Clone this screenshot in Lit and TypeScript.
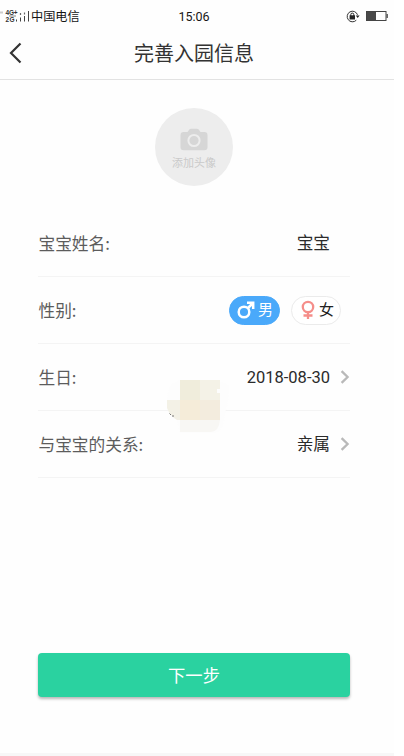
import { LitElement, html, css } from "lit";
import { customElement } from "lit/decorators.js";

const chevron = html`<svg class="chevron" width="10" height="14" viewBox="0 0 10 14">
  <path d="M1.6 1.2 L7.6 7 L1.6 12.8" fill="none" stroke="#b9b9b9" stroke-width="2.3" />
</svg>`;

@customElement("status-bar")
class StatusBar extends LitElement {
  static styles = css`
    :host {
      display: grid;
      grid-template-columns: 1fr auto 1fr;
      align-items: center;
      height: 32px;
      padding: 0 6px 0 0;
      font: 12px/16px Roboto, "Noto Sans CJK SC", sans-serif;
      color: #151515;
    }
    .carrier { display: flex; align-items: center; }
    .carrier span { font-size: 12.2px; padding-top: 2px; }
    .time { font-size: 12.5px; padding-top: 1px; }
    .right { display: flex; align-items: center; justify-content: flex-end; gap: 6px; }
    .net { font: 700 6.5px "Liberation Sans", sans-serif; fill: #333; }
    svg { display: block; flex: none; }
  `;
  render() {
    return html`
      <div class="carrier">
        <svg width="31" height="16" viewBox="0 0 31 16">
          <path d="M0 4.5h3" stroke="#ccc" stroke-width="2" />
          <text class="net" x="5.5" y="7.3" textLength="12">4G+</text>
          <text class="net" x="5.5" y="13.6" textLength="9">2G</text>
          <path d="M9 8h7" stroke="#666" stroke-width="0.8" fill="none" />
          <path d="M16.5 11.5v2M20.5 9.5v4M24.5 8v5.5M28.5 3v10.5" stroke="#444" stroke-width="1" />
          <path d="M20.5 5v2M24.5 4.5v2" stroke="#666" stroke-width="1.2" />
        </svg>
        <span>中国电信</span>
      </div>
      <div class="time">15:06</div>
      <div class="right">
        <svg width="14" height="13" viewBox="0 0 14 13">
          <path d="M10.3 10.2A5.3 5.3 0 1 1 11.5 4.8" fill="none" stroke="#333" stroke-width="1" />
          <path d="M9.8 5.5h3.8l-1.9 2.5z" fill="#222" />
          <rect x="3.6" y="5.3" width="5.4" height="4.2" fill="#222" />
          <path d="M4.8 6V4.6a1.5 1.5 0 0 1 3 0V6" fill="none" stroke="#222" />
        </svg>
        <svg width="22" height="10" viewBox="0 0 22 10">
          <rect x="0.5" y="0.5" width="19.5" height="9" fill="#fff" stroke="#444" />
          <rect x="1" y="1" width="9" height="8" fill="#494949" />
          <rect x="20.5" y="3" width="1.3" height="4" fill="#444" />
        </svg>
      </div>
    `;
  }
}

@customElement("app-root")
class AppRoot extends LitElement {
  static styles = css`
    :host {
      display: block;
      width: 404px;
      height: 756px;
      overflow: hidden;
      background: #fff;
      font-family: Roboto, "Noto Sans CJK SC", sans-serif;
    }
    .screen {
      display: flex;
      flex-direction: column;
      width: 394px;
      height: 756px;
      box-sizing: border-box;
      background: #fefefe;
      border-bottom: 3px solid #f7f7f7;
    }
    .header {
      display: grid;
      grid-template-columns: 40px 1fr 46px;
      align-items: center;
      height: 47px;
      border-bottom: 1px solid #e2e2e2;
    }
    .back { display: block; margin: -5px 0 0 9px; }
    .title {
      margin-top: -3px;
      text-align: center;
      font-size: 20px;
      line-height: 28px;
      color: #333;
    }
    .form {
      flex: 1;
      display: flex;
      flex-direction: column;
      padding: 28px 44px 0 38px;
    }
    .avatar {
      align-self: center;
      width: 78px;
      height: 78px;
      border-radius: 50%;
      background: #ededed;
      display: flex;
      flex-direction: column;
      align-items: center;
      color: #cacaca;
      font-size: 11px;
      line-height: 16px;
      box-sizing: border-box;
      padding-top: 20px;
    }
    .avatar svg { display: block; margin-bottom: 5px; }
    .rows { margin-top: 24px; position: relative; }
    .row {
      display: flex;
      align-items: center;
      justify-content: space-between;
      height: 67px;
      box-sizing: border-box;
      border-bottom: 1px solid #f4f4f4;
      font-size: 16.7px;
      line-height: 24px;
      color: #5c5c5c;
    }
    .label { padding-left: 0.5px; font-family: "Noto Sans CJK SC", sans-serif; }
    .value { display: flex; align-items: center; color: #2b2b2b; }
    .value span { padding-top: 2px; }
    .value .date { padding-top: 1px; font-size: 16.5px; }
    .plain { padding-right: 20px; }
    .value .chevron { margin-left: 10px; }
    .genders { display: flex; gap: 11px; padding-right: 9px; }
    .pill {
      display: flex;
      align-items: center;
      gap: 2px;
      box-sizing: border-box;
      width: 50px;
      height: 29px;
      padding-left: 8px;
      border: 1px solid #ebebeb;
      border-radius: 15px;
      background: #fff;
      color: #222;
      font-size: 15px;
    }
    .pill.on { background: #4aa9fa; border-color: #4aa9fa; color: #fff; width: 51px; padding-left: 7px; gap: 3px; }
    .pill svg { display: block; flex: none; }
    .smudge { position: absolute; left: 127px; top: 168px; display: block; }
    .next {
      display: block;
      margin-top: 175px;
      width: 312px;
      height: 44px;
      flex: none;
      padding: 2px 0 0;
      border: 0;
      border-radius: 4px;
      background: #2ad2a0;
      color: #fff;
      font: 17.3px/24px Roboto, "Noto Sans CJK SC", sans-serif;
      box-shadow: 0 2px 3px rgba(0, 0, 0, 0.28);
    }
  `;

  render() {
    return html`
      <div class="screen">
        <status-bar></status-bar>
        <div class="header">
          <svg class="back" width="14" height="22" viewBox="0 0 14 22">
            <path d="M11.5 1.5L2 11l9.5 9.5" fill="none" stroke="#333" stroke-width="2.2" />
          </svg>
          <div class="title">完善入园信息</div>
        </div>
        <div class="form">
          <div class="avatar">
            <svg width="28" height="23" viewBox="0 0 28 23">
              <path d="M3.5 4h4L9.3 1.5Q10 .8 11 .8h6q1 0 1.7.7L20.5 4h4q3 0 3 3v12.2q0 3-3 3h-21q-3 0-3-3V7q0-3 3-3z" fill="#d6d6d6" />
              <circle cx="14" cy="12.5" r="5.6" fill="#d6d6d6" stroke="#ededed" stroke-width="2" />
            </svg>
            <span>添加头像</span>
          </div>
          <div class="rows">
            <div class="row"><span class="label">宝宝姓名:</span><span class="value plain"><span>宝宝</span></span></div>
            <div class="row">
              <span class="label">性别:</span>
              <div class="genders">
                <div class="pill on">
                  <svg width="18" height="18" viewBox="0 0 18 18" fill="none" stroke="#fff" stroke-width="2.5">
                    <circle cx="7" cy="11" r="5.3" />
                    <path d="M11 7l5-5M10 1.8h6.2V8" />
                  </svg>
                  <span>男</span>
                </div>
                <div class="pill">
                  <svg width="17" height="20" viewBox="0 0 17 20" fill="none" stroke="#f58e8a" stroke-width="2.3">
                    <circle cx="8" cy="7" r="5.2" />
                    <path d="M8 12v7M3.5 15.5h9" />
                  </svg>
                  <span>女</span>
                </div>
              </div>
            </div>
            <div class="row"><span class="label">生日:</span><span class="value"><span class="date">2018-08-30</span>${chevron}</span></div>
            <div class="row"><span class="label">与宝宝的关系:</span><span class="value"><span>亲属</span>${chevron}</span></div>
            <svg class="smudge" width="66" height="58" viewBox="0 0 66 58">
              <path d="M8 5Q2 12 2 24l9 14 4 17h36q8-4 9-20 4-12 4-28L52 2H15z" fill="#fdfdfd" />
              <rect x="15" y="2" width="20" height="20" fill="#f0eddc" />
              <path d="M35 2h20v9h-3v4h3v7H35z" fill="#f4f2e7" />
              <path d="M2 22h13v20h-3Q5 38 2 30z" fill="#f3f1e6" />
              <rect x="15" y="22" width="20" height="20" fill="#f5ecd9" />
              <rect x="35" y="22" width="20" height="20" fill="#f3ecde" />
              <path d="M15 42h40q-1 11-9 12H15z" fill="#f8f7f4" />
              <path d="M4.5 35.5l1.5 1.5M7 38h2" stroke="#777" stroke-width="1" />
            </svg>
          </div>
          <button class="next">下一步</button>
        </div>
      </div>
    `;
  }
}
